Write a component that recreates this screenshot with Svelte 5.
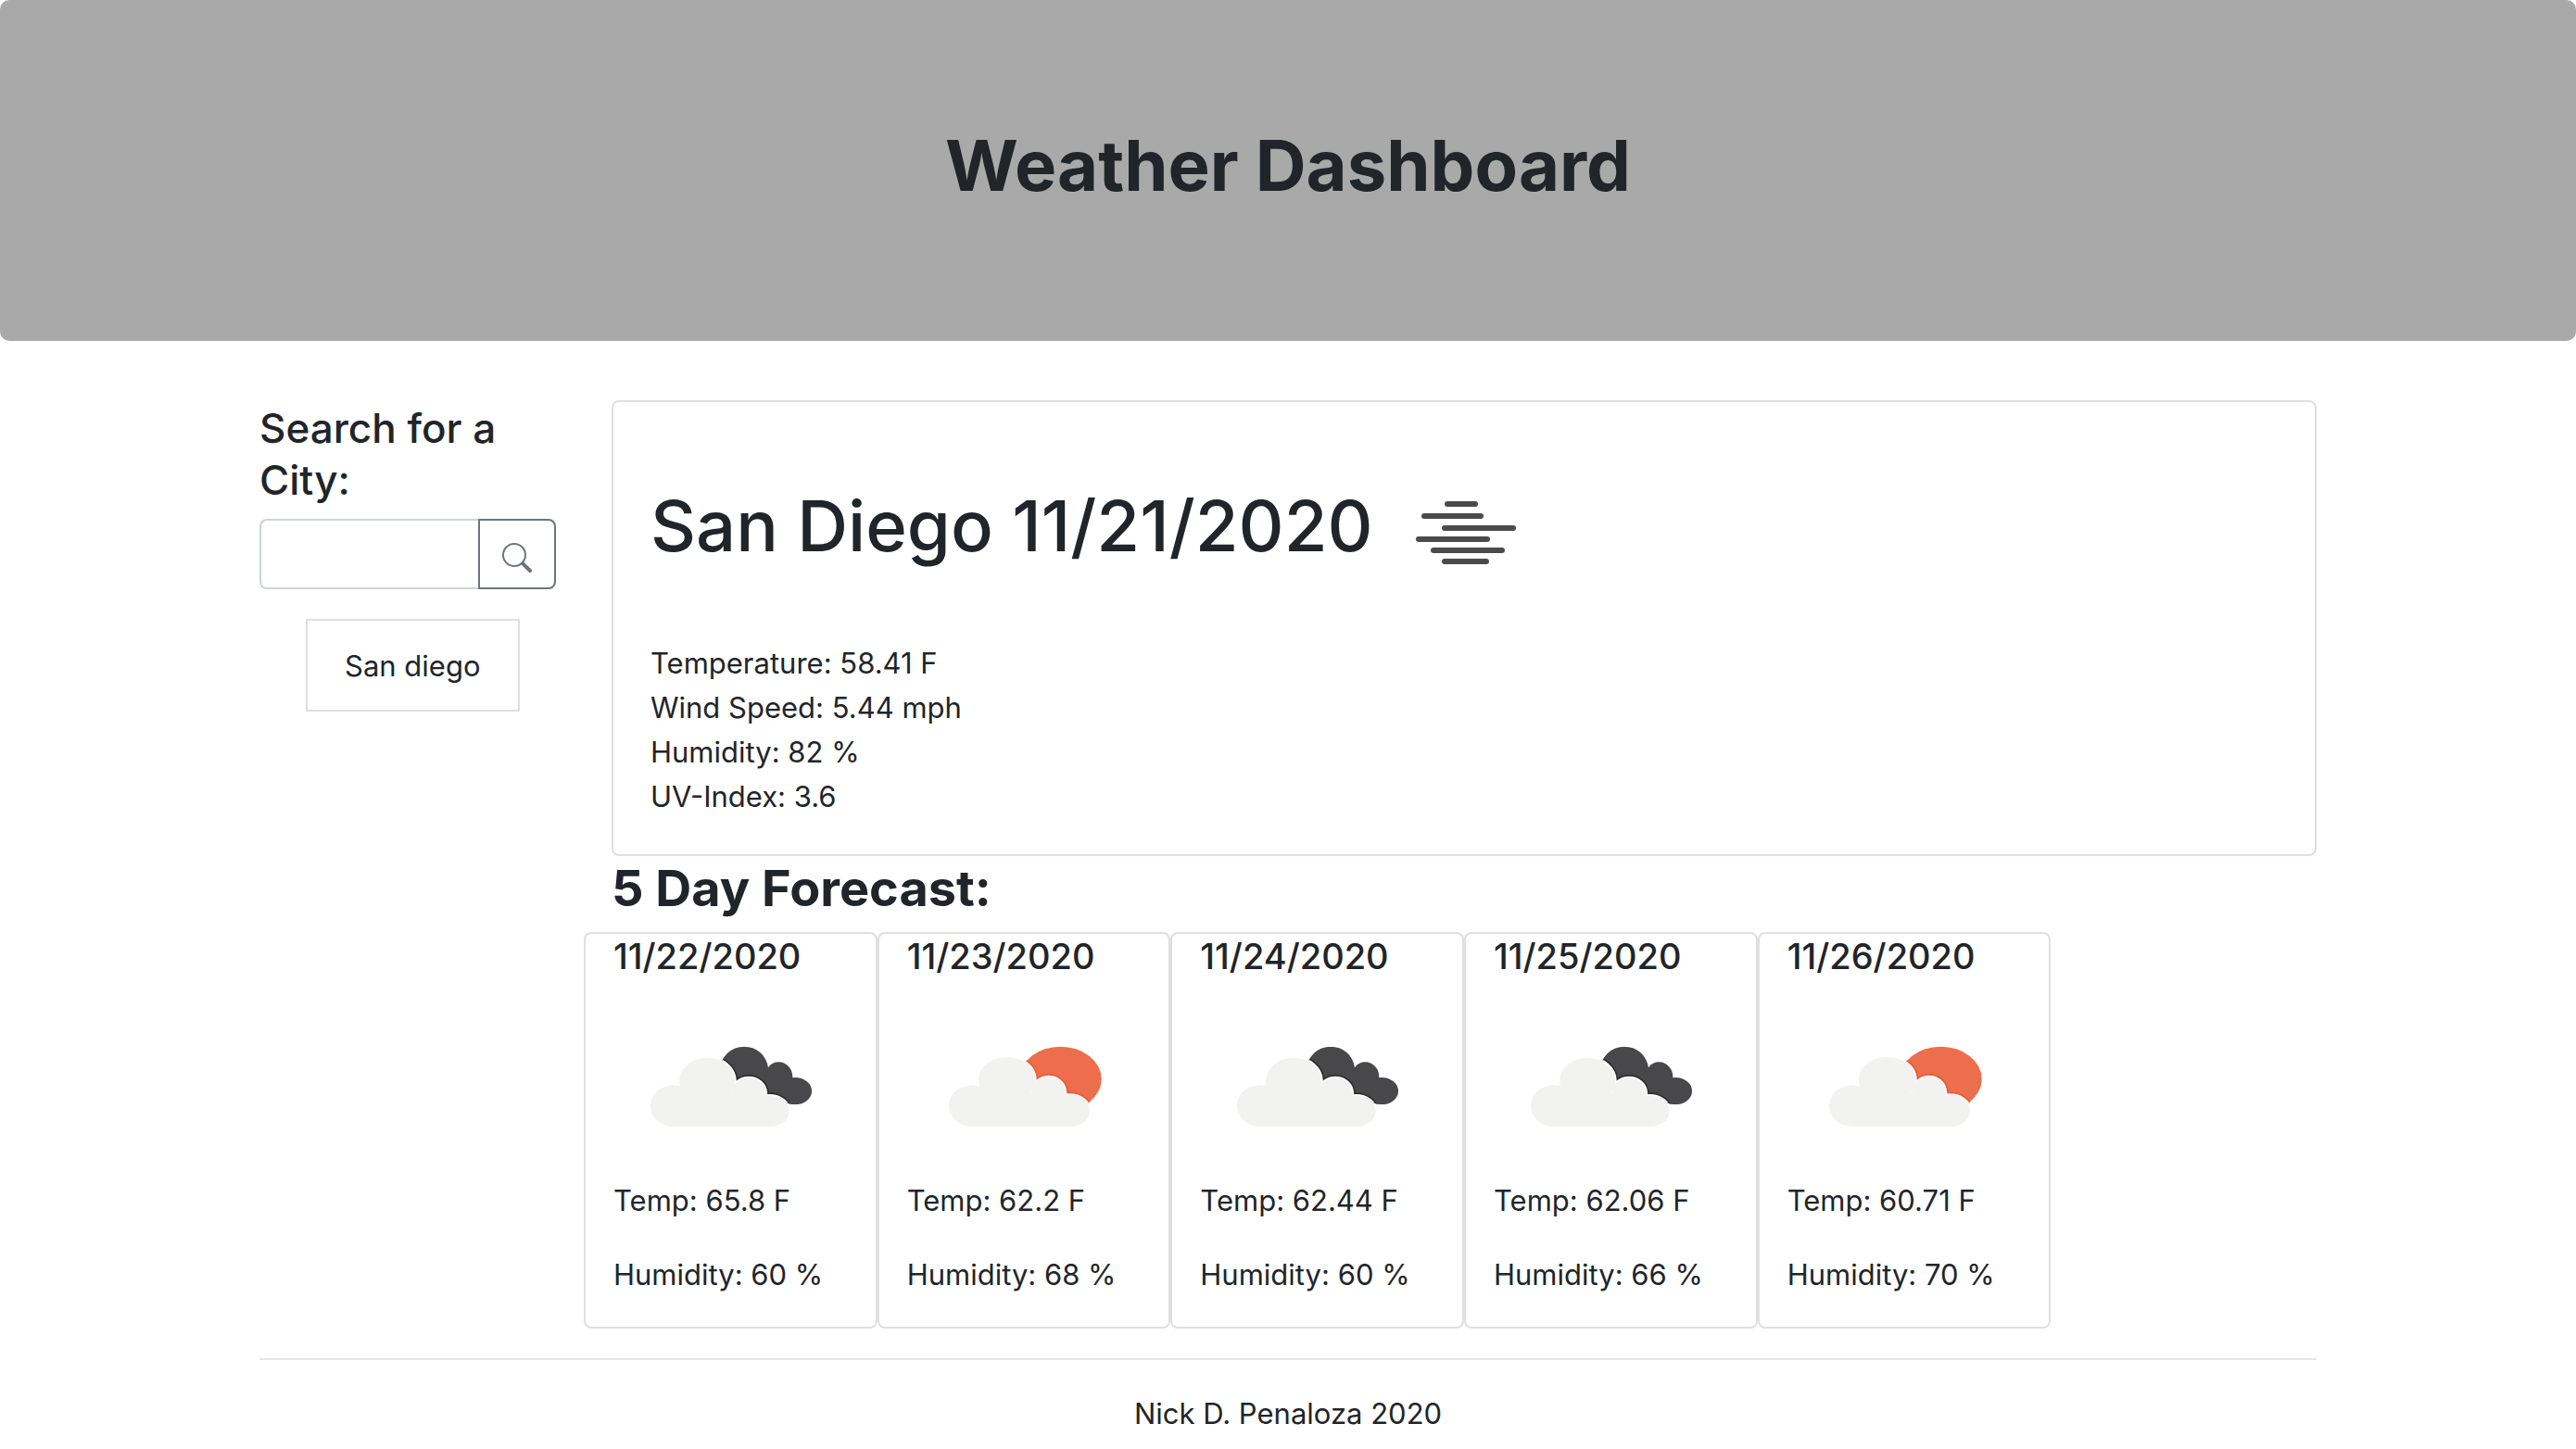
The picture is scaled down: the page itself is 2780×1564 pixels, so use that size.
<script>
  let query = $state('');
  const history = ['San diego'];
  const current = [
    'Temperature: 58.41 F',
    'Wind Speed: 5.44 mph',
    'Humidity: 82 %',
    'UV-Index: 3.6'
  ];
  const forecast = [
    { date: '11/22/2020', icon: 'clouds', temp: '65.8', humidity: 60 },
    { date: '11/23/2020', icon: 'sun', temp: '62.2', humidity: 68 },
    { date: '11/24/2020', icon: 'clouds', temp: '62.44', humidity: 60 },
    { date: '11/25/2020', icon: 'clouds', temp: '62.06', humidity: 66 },
    { date: '11/26/2020', icon: 'sun', temp: '60.71', humidity: 70 }
  ];
</script>

{#snippet cloudFront()}
  <ellipse cx="250" cy="170" rx="90" ry="75" />
  <ellipse cx="140" cy="251" rx="74" ry="67" />
  <ellipse cx="385" cy="210" rx="55" ry="50" />
  <ellipse cx="452" cy="268" rx="64" ry="50" />
  <path d="M140 210H440V318H140Z" />
{/snippet}

{#snippet sunFront()}
  <ellipse cx="260" cy="166" rx="92" ry="73" />
  <ellipse cx="148" cy="251" rx="76" ry="67" />
  <ellipse cx="396" cy="207" rx="53" ry="50" />
  <ellipse cx="465" cy="267" rx="64" ry="51" />
  <path d="M148 210H450V318H148Z" />
{/snippet}

<header class="hero">
  <h1>Weather Dashboard</h1>
</header>

<div class="container">
  <div class="row">
    <aside class="sidebar">
      <h2 class="search-title"><label for="city">Search for a City:</label></h2>
      <form class="search" onsubmit={(e) => e.preventDefault()}>
        <input id="city" type="text" bind:value={query} />
        <button type="submit" aria-label="Search">
          <svg viewBox="0 0 16 16" fill="currentColor" aria-hidden="true">
            <path fill-rule="evenodd" d="M10.442 10.442a1 1 0 0 1 1.415 0l3.85 3.85a1 1 0 0 1-1.414 1.415l-3.85-3.85a1 1 0 0 1 0-1.415z" />
            <path fill-rule="evenodd" d="M6.5 12a5.500 5.500 0 1 0 0-11 5.500 5.500 0 0 0 0 11zM13 6.500a6.500 6.500 0 1 1-13 0 6.500 6.500 0 0 1 13 0z" />
          </svg>
        </button>
      </form>
      <ul class="history">
        {#each history as city}
          <li>{city}</li>
        {/each}
      </ul>
    </aside>

    <main class="content">
      <section class="card today">
        <h2>San Diego 11/21/2020<svg class="mist" viewBox="0 0 200 200" role="img" aria-label="Mist">
            <g stroke="#4b4b4c" stroke-width="6" stroke-linecap="round">
              <path d="M80 70h30M55 83h61M77 96h74M49 108h74M65 120h74M77 132h45" />
            </g>
          </svg></h2>
        {#each current as line}
          <p>{line}</p>
        {/each}
      </section>

      <h2 class="forecast-title">5 Day Forecast:</h2>
      <div class="forecast">
        {#each forecast as day, i}
          <article class="card day">
            <h3>{day.date}</h3>
            <svg class="weather" viewBox="0 0 253 200" preserveAspectRatio="none" aria-hidden="true">
              {#if day.icon === 'clouds'}
                <g transform="translate(18 38) scale(0.3333)">
                  <clipPath id="back-{i}">
                    <ellipse cx="370" cy="135" rx="78" ry="76" />
                    <ellipse cx="482" cy="158" rx="45" ry="49" />
                    <ellipse cx="535" cy="203" rx="54" ry="44" />
                    <path d="M400 130H470L500 200 480 240 400 200Z" />
                  </clipPath>
                  <g clip-path="url(#back-{i})">
                    <path fill="#48484a" d="M250 40H600V260H250Z" />
                    <g fill="#2d2c2e" stroke="#2d2c2e" stroke-width="20">{@render cloudFront()}</g>
                    <g fill="#fff" stroke="#fff" stroke-width="10">{@render cloudFront()}</g>
                  </g>
                  <g fill="#f2f2f0">{@render cloudFront()}</g>
                </g>
              {:else}
                <g transform="translate(21 38) scale(0.3333)">
                  <clipPath id="back-{i}">
                    <ellipse cx="434" cy="164" rx="133" ry="105" />
                  </clipPath>
                  <g clip-path="url(#back-{i})">
                    <path fill="#ec6e4c" d="M250 40H600V280H250Z" />
                    <g fill="#ea5a32" stroke="#ea5a32" stroke-width="20">{@render sunFront()}</g>
                    <g fill="#f1f8fa" stroke="#f1f8fa" stroke-width="10">{@render sunFront()}</g>
                  </g>
                  <g fill="#f2f2f0">{@render sunFront()}</g>
                </g>
              {/if}
            </svg>
            <p>Temp: {day.temp} F</p>
            <p>Humidity: {day.humidity} %</p>
          </article>
        {/each}
      </div>
    </main>
  </div>

  <hr />
  <footer>Nick D. Penaloza 2020</footer>
</div>

<style>
  :global(body) {
    margin: 0;
    background: #fff;
    color: #212529;
    font-family: Inter, 'Liberation Sans', sans-serif;
    font-size: 31px;
    line-height: 48px;
  }

  :global(*) {
    box-sizing: border-box;
  }

  h1,
  h2,
  h3,
  p,
  ul {
    margin: 0;
  }

  .hero {
    padding: 130px 64px 142px;
    margin-bottom: 64px;
    border-radius: 10px;
    background: #a9a9a9;
    text-align: center;
  }

  .hero h1 {
    font-size: 76px;
    line-height: 96px;
    font-weight: 700;
  }

  .container {
    max-width: 2280px;
    margin: 0 auto;
    padding: 0 30px;
  }

  .row {
    display: grid;
    grid-template-columns: 1fr 5fr;
    margin: 0 -30px;
  }

  .sidebar,
  .content {
    min-width: 0;
    padding: 0 30px;
  }

  .search-title {
    padding-top: 2px;
    margin-bottom: 14px;
    font-size: 44px;
    line-height: 56px;
    font-weight: 500;
  }

  .search {
    display: flex;
  }

  .search input {
    flex: 1;
    min-width: 0;
    height: 76px;
    padding: 12px 24px;
    border: 2px solid #ced4da;
    border-right: 0;
    border-radius: 8px 0 0 8px;
    background: #fff;
    color: inherit;
    font: inherit;
  }

  .search button {
    width: 84px;
    padding: 8px 0 0;
    border: 2px solid #6c757d;
    border-radius: 0 8px 8px 0;
    background: #fff;
    color: #6c757d;
  }

  .search svg {
    display: block;
    width: 32px;
    height: 32px;
    margin: 0 auto;
  }

  .history {
    width: fit-content;
    margin: 32px 0 0 50px;
    padding: 0;
    list-style: none;
  }

  .history li {
    padding: 25px 40px 23px;
    border: 2px solid #dfdfdf;
  }

  .card {
    border: 2px solid #dfdfdf;
    border-radius: 8px;
  }

  .today {
    padding: 40px 40px 38px;
  }

  .today h2 {
    margin-bottom: 18px;
    font-size: 76px;
    line-height: 96px;
    font-weight: 500;
  }

  .mist {
    width: 200px;
    height: 200px;
    vertical-align: middle;
    fill: none;
  }

  .forecast-title {
    padding-top: 2px;
    margin-bottom: 14px;
    font-size: 54px;
    line-height: 66px;
    font-weight: 700;
  }

  .forecast {
    display: grid;
    grid-template-columns: repeat(6, 1fr);
    margin: 0 -30px;
  }

  .day {
    padding: 0 30px;
  }

  .day h3 {
    margin-bottom: 16px;
    font-size: 38px;
    line-height: 48px;
    font-weight: 500;
  }

  .weather {
    display: block;
    width: 100%;
    height: 200px;
  }

  .day p {
    margin-bottom: 32px;
    white-space: nowrap;
  }

  hr {
    margin: 32px 0 34px;
    border: 0;
    border-top: 2px solid #e5e5e5;
  }

  footer {
    text-align: center;
  }
</style>
